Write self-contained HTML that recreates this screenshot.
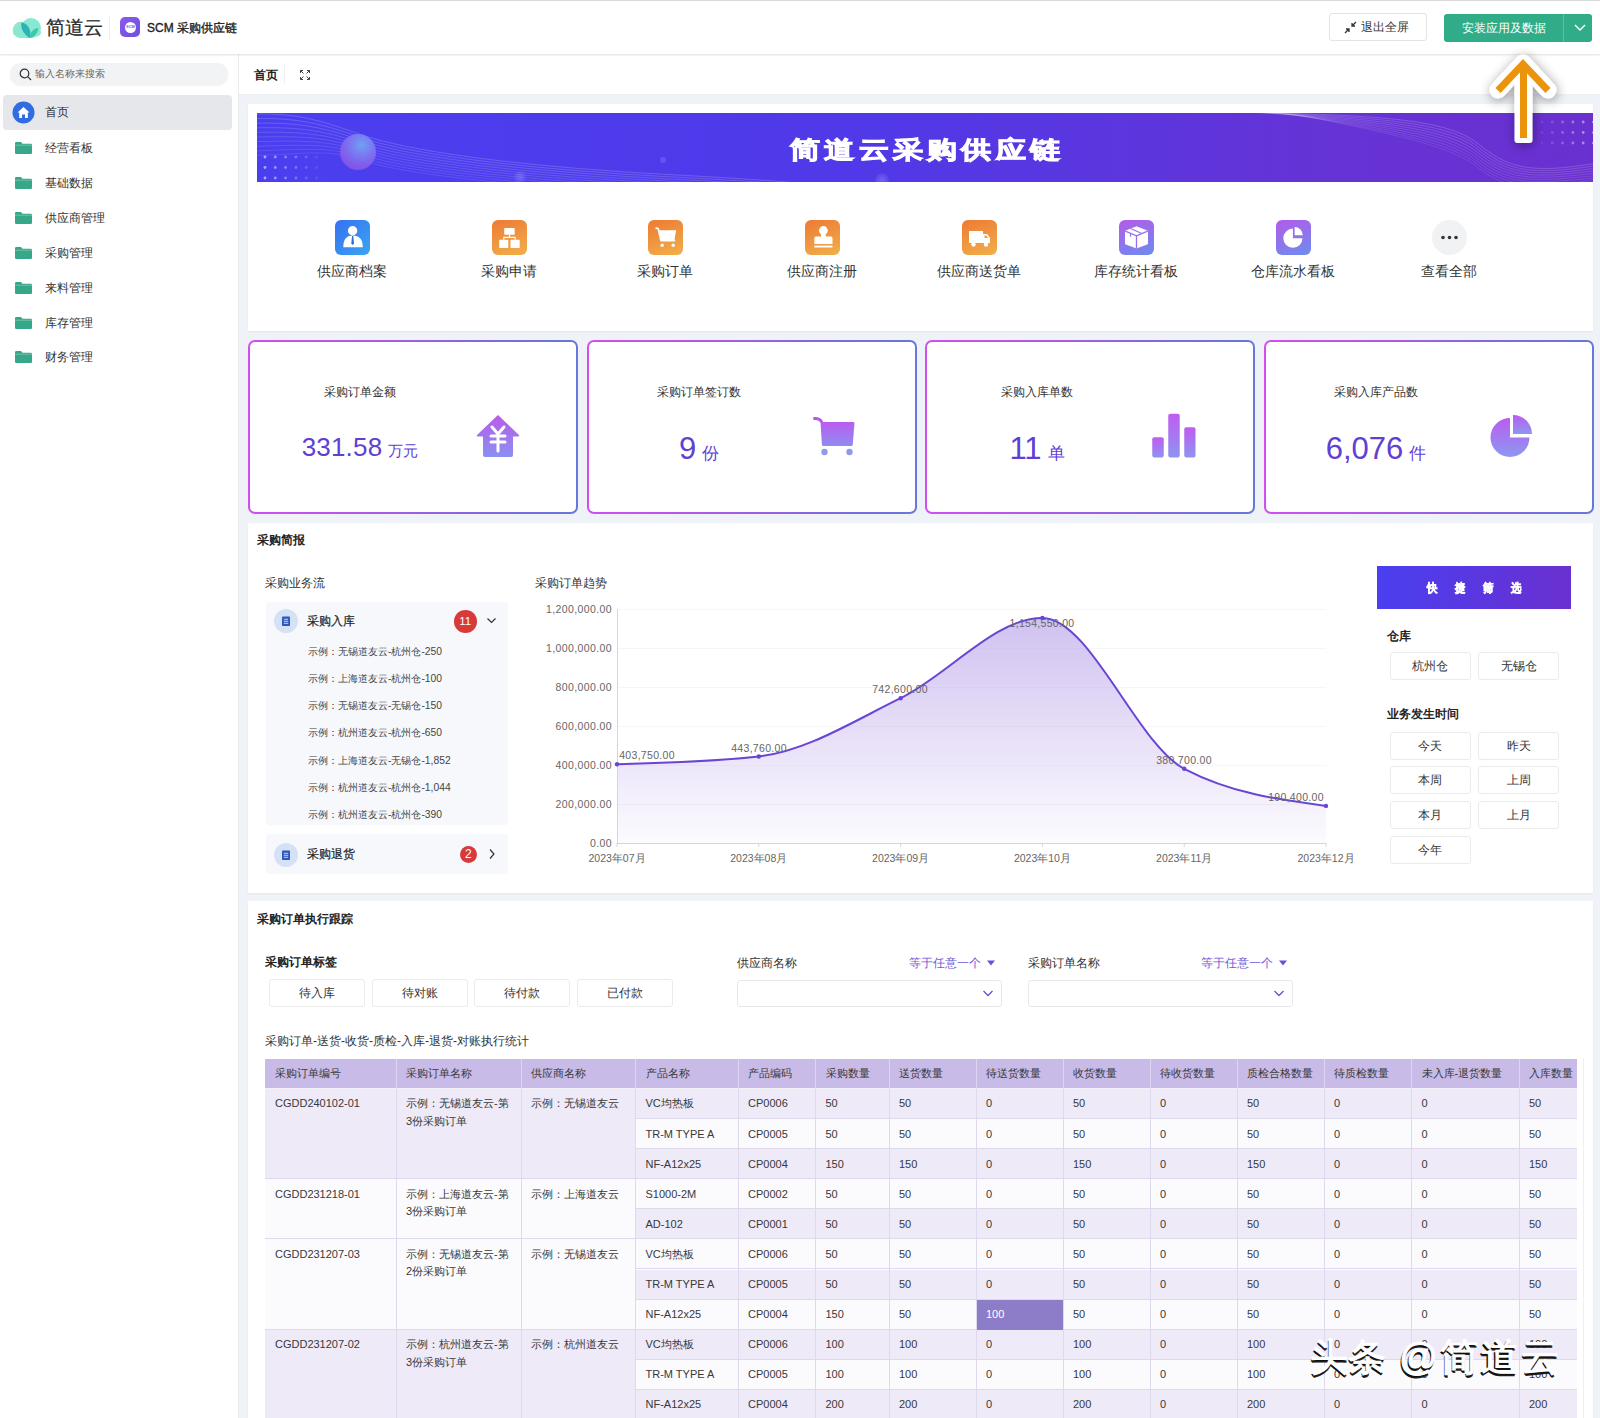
<!DOCTYPE html>
<html><head><meta charset="utf-8">
<style>
*{box-sizing:border-box;margin:0;padding:0}
html,body{width:1600px;height:1418px;overflow:hidden}
body{position:relative;font-family:"Liberation Sans",sans-serif;background:#eff2f6;color:#333;font-size:12px}
.a{position:absolute}
.t{position:absolute;white-space:nowrap;line-height:1}
/* header */
#hdr{left:0;top:0;width:1600px;height:54px;background:#fff;border-top:1px solid #d9d9d9;box-shadow:0 1px 2px rgba(0,0,0,.13);z-index:5}
#side{left:0;top:54px;width:239px;height:1364px;background:#fff;border-right:1px solid #e9eaec}
#tabbar{left:239px;top:54px;width:1361px;height:41px;background:#fff;border-bottom:1px solid #eef0f3}
.card{position:absolute;background:#fff;box-shadow:0 1px 2px rgba(0,0,0,.05)}
.nav{position:absolute;left:0;width:239px;height:35px}
.nav .fold{position:absolute;left:15px;top:12px;width:17px;height:12px}
.nav .lbl{position:absolute;left:45px;top:11px;font-size:12px;line-height:14px;color:#333}
</style></head><body>

<!-- HEADER -->
<div id="hdr" class="a">
  <svg class="a" style="left:0;top:0" width="50" height="45" viewBox="0 0 50 45">
    <circle cx="21" cy="29" r="8.3" fill="#8fe6d1"/>
    <circle cx="31" cy="27" r="10" fill="#86ead3"/>
    <ellipse cx="27" cy="31.5" rx="14" ry="5.8" fill="#8ae8d2"/>
    <path d="M21.5 21.5 C27.5 22, 32 29, 29.8 37 C24.5 34, 20 27.5, 21.5 21.5Z" fill="#2db2b6"/>
    <path d="M29.8 37 C30 31.5, 33 27.5, 38.3 27 C38 32, 34.5 36, 29.8 37Z" fill="#3cc9a9"/>
  </svg>
  <div class="t" style="left:46px;top:17px;font-size:18.8px;line-height:20px;color:#2b2b2b;-webkit-text-stroke:0.25px #2b2b2b">简道云</div>
  <div class="a" style="left:109px;top:15px;width:1px;height:24px;background:#f0f0f0"></div>
  <div class="a" style="left:120px;top:16px;width:20px;height:20px;border-radius:5px;background:linear-gradient(135deg,#8a5af0,#6d4fe0)"></div>
  <div class="a" style="left:124.5px;top:20.5px;width:11px;height:11px;border-radius:50%;background:#fff"></div>
  <div class="t" style="left:126px;top:24px;font-size:4px;color:#7a55e8;font-weight:bold">SCM</div>
  <div class="t" style="left:147px;top:20px;font-size:12px;line-height:14px;color:#222;-webkit-text-stroke:0.35px #222">SCM 采购供应链</div>

  <div class="a" style="left:1329px;top:12px;width:98px;height:28px;border:1px solid #e3e3e3;border-radius:3px;background:#fff"></div>
  <svg class="a" style="left:1344px;top:20px" width="13" height="13" viewBox="0 0 13 13" fill="none" stroke="#333" stroke-width="1.3">
    <path d="M1 12 L5 8 M2 8 H5 V11"/><path d="M12 1 L8 5 M8 2 V5 H11"/>
  </svg>
  <div class="t" style="left:1361px;top:19px;font-size:12px;line-height:14px;color:#333">退出全屏</div>

  <div class="a" style="left:1444px;top:13px;width:148px;height:28px;border-radius:3px;background:#30ad88"></div>
  <div class="a" style="left:1563px;top:13px;width:1px;height:28px;background:#5cc0a2"></div>
  <div class="t" style="left:1462px;top:20px;font-size:12px;line-height:14px;color:#fff">安装应用及数据</div>
  <svg class="a" style="left:1573px;top:22px" width="14" height="10" viewBox="0 0 14 10" fill="none" stroke="#fff" stroke-width="1.5"><path d="M2 2 L7 7 L12 2"/></svg>
</div>


<!-- SIDEBAR -->
<div id="side" class="a">
  <div class="a" style="left:10px;top:9px;width:218px;height:22px;border-radius:11px;background:#f2f3f5;box-shadow:0 1px 2px rgba(0,0,0,.06)"></div>
  <svg class="a" style="left:19px;top:14px" width="13" height="13" viewBox="0 0 13 13" fill="none" stroke="#333" stroke-width="1.2"><circle cx="5.5" cy="5.5" r="4.3"/><path d="M8.7 8.7 L12 12"/></svg>
  <div class="t" style="left:35px;top:14px;font-size:10px;line-height:12px;color:#666">输入名称来搜索</div>
  <div class="a" style="left:3px;top:41px;width:229px;height:35px;border-radius:4px;background:#e5e7eb"></div>
  <svg class="a" style="left:12px;top:47px" width="23" height="23" viewBox="0 0 23 23"><circle cx="11.5" cy="11.5" r="11" fill="#2f6de1"/><path d="M5.5 11.5 L11.5 6 L17.5 11.5 H15.8 V17 H13 V13.5 H10 V17 H7.2 V11.5Z" fill="#fff"/></svg>
  <div class="t" style="left:45px;top:51px;font-size:12px;line-height:14px;color:#333">首页</div>
  <div class="nav" style="top:76.0px"><svg class="fold" viewBox="0 0 17 12"><path d="M0 1.2 Q0 0 1.2 0 H6 L7.5 1.8 H15.8 Q17 1.8 17 3 V10.8 Q17 12 15.8 12 H1.2 Q0 12 0 10.8Z" fill="#37a789"/><path d="M0 3.2 H17" stroke="#7fcab4" stroke-width="0.8"/></svg><div class="lbl">经营看板</div></div>
  <div class="nav" style="top:110.9px"><svg class="fold" viewBox="0 0 17 12"><path d="M0 1.2 Q0 0 1.2 0 H6 L7.5 1.8 H15.8 Q17 1.8 17 3 V10.8 Q17 12 15.8 12 H1.2 Q0 12 0 10.8Z" fill="#37a789"/><path d="M0 3.2 H17" stroke="#7fcab4" stroke-width="0.8"/></svg><div class="lbl">基础数据</div></div>
  <div class="nav" style="top:145.8px"><svg class="fold" viewBox="0 0 17 12"><path d="M0 1.2 Q0 0 1.2 0 H6 L7.5 1.8 H15.8 Q17 1.8 17 3 V10.8 Q17 12 15.8 12 H1.2 Q0 12 0 10.8Z" fill="#37a789"/><path d="M0 3.2 H17" stroke="#7fcab4" stroke-width="0.8"/></svg><div class="lbl">供应商管理</div></div>
  <div class="nav" style="top:180.7px"><svg class="fold" viewBox="0 0 17 12"><path d="M0 1.2 Q0 0 1.2 0 H6 L7.5 1.8 H15.8 Q17 1.8 17 3 V10.8 Q17 12 15.8 12 H1.2 Q0 12 0 10.8Z" fill="#37a789"/><path d="M0 3.2 H17" stroke="#7fcab4" stroke-width="0.8"/></svg><div class="lbl">采购管理</div></div>
  <div class="nav" style="top:215.6px"><svg class="fold" viewBox="0 0 17 12"><path d="M0 1.2 Q0 0 1.2 0 H6 L7.5 1.8 H15.8 Q17 1.8 17 3 V10.8 Q17 12 15.8 12 H1.2 Q0 12 0 10.8Z" fill="#37a789"/><path d="M0 3.2 H17" stroke="#7fcab4" stroke-width="0.8"/></svg><div class="lbl">来料管理</div></div>
  <div class="nav" style="top:250.5px"><svg class="fold" viewBox="0 0 17 12"><path d="M0 1.2 Q0 0 1.2 0 H6 L7.5 1.8 H15.8 Q17 1.8 17 3 V10.8 Q17 12 15.8 12 H1.2 Q0 12 0 10.8Z" fill="#37a789"/><path d="M0 3.2 H17" stroke="#7fcab4" stroke-width="0.8"/></svg><div class="lbl">库存管理</div></div>
  <div class="nav" style="top:285.4px"><svg class="fold" viewBox="0 0 17 12"><path d="M0 1.2 Q0 0 1.2 0 H6 L7.5 1.8 H15.8 Q17 1.8 17 3 V10.8 Q17 12 15.8 12 H1.2 Q0 12 0 10.8Z" fill="#37a789"/><path d="M0 3.2 H17" stroke="#7fcab4" stroke-width="0.8"/></svg><div class="lbl">财务管理</div></div>
</div>


<div id="tabbar" class="a">
  <div class="t" style="left:15px;top:14px;font-size:12px;line-height:14px;color:#222;font-weight:bold">首页</div>
  <div class="a" style="left:45px;top:10px;width:1px;height:20px;background:#f0f0f0"></div>
  <svg class="a" style="left:60px;top:15px" width="12" height="12" viewBox="0 0 12 12" fill="none" stroke="#444" stroke-width="1"><path d="M1.5 4 V1.5 H4 M1.5 1.5 L4.5 4.5"/><path d="M8 1.5 H10.5 V4 M10.5 1.5 L7.5 4.5"/><path d="M1.5 8 V10.5 H4 M1.5 10.5 L4.5 7.5"/><path d="M10.5 8 V10.5 H8 M10.5 10.5 L7.5 7.5"/></svg>
</div>



<!-- CARD1 banner + apps -->
<div class="card" style="left:248px;top:104px;width:1345px;height:227px"></div>
<div class="a" style="left:257px;top:113px;width:1336px;height:69px;overflow:hidden;background:linear-gradient(90deg,#4a3ff0 0%,#5039e8 45%,#6533d6 80%,#6a30d0 100%)">
 <svg class="a" style="left:0;top:0" width="1336" height="69" viewBox="0 0 1336 69">
  <defs><radialGradient id="sph" cx="0.6" cy="0.3" r="0.8"><stop offset="0" stop-color="#6fa6f5" stop-opacity="0.95"/><stop offset="0.6" stop-color="#8a6ef0" stop-opacity="0.8"/><stop offset="1" stop-color="#a050e0" stop-opacity="0.7"/></radialGradient>
  <radialGradient id="sph2" cx="0.5" cy="0.5" r="0.5"><stop offset="0" stop-color="rgba(160,150,255,0.45)"/><stop offset="1" stop-color="rgba(160,150,255,0.1)"/></radialGradient></defs>
  <path d="M0 1.0 C 45 0.0, 70 10.0, 105 22.0 S 230 52.0, 420 62.0 S 600 80.0, 720 84.0" stroke="rgba(255,255,255,0.26)" stroke-width="0.7" fill="none"/><path d="M0 5.6 C 45 4.6, 70 12.8, 105 24.8 S 230 54.2, 420 64.2 S 600 80.5, 720 85.0" stroke="rgba(255,255,255,0.25)" stroke-width="0.7" fill="none"/><path d="M0 10.2 C 45 9.2, 70 15.6, 105 27.6 S 230 56.4, 420 66.4 S 600 81.0, 720 86.0" stroke="rgba(255,255,255,0.24)" stroke-width="0.7" fill="none"/><path d="M0 14.8 C 45 13.8, 70 18.4, 105 30.4 S 230 58.6, 420 68.6 S 600 81.5, 720 87.0" stroke="rgba(255,255,255,0.22)" stroke-width="0.7" fill="none"/><path d="M0 19.4 C 45 18.4, 70 21.2, 105 33.2 S 230 60.8, 420 70.8 S 600 82.0, 720 88.0" stroke="rgba(255,255,255,0.21)" stroke-width="0.7" fill="none"/><path d="M0 24.0 C 45 23.0, 70 24.0, 105 36.0 S 230 63.0, 420 73.0 S 600 82.5, 720 89.0" stroke="rgba(255,255,255,0.20)" stroke-width="0.7" fill="none"/><path d="M0 28.6 C 45 27.6, 70 26.8, 105 38.8 S 230 65.2, 420 75.2 S 600 83.0, 720 90.0" stroke="rgba(255,255,255,0.19)" stroke-width="0.7" fill="none"/><path d="M0 33.2 C 45 32.2, 70 29.6, 105 41.6 S 230 67.4, 420 77.4 S 600 83.5, 720 91.0" stroke="rgba(255,255,255,0.18)" stroke-width="0.7" fill="none"/><path d="M0 37.8 C 45 36.8, 70 32.4, 105 44.4 S 230 69.6, 420 79.6 S 600 84.0, 720 92.0" stroke="rgba(255,255,255,0.16)" stroke-width="0.7" fill="none"/><path d="M0 42.4 C 45 41.4, 70 35.2, 105 47.2 S 230 71.8, 420 81.8 S 600 84.5, 720 93.0" stroke="rgba(255,255,255,0.15)" stroke-width="0.7" fill="none"/>
  <circle cx="101" cy="39" r="18" fill="url(#sph)"/>
  <circle cx="263" cy="64" r="6" fill="url(#sph2)"/>
  <circle cx="625" cy="67" r="7" fill="url(#sph2)"/>
  <circle cx="406" cy="47" r="3" fill="rgba(150,150,255,0.3)"/>
  <circle cx="8.0" cy="44.0" r="1.4" fill="rgba(255,255,255,0.55)"/><circle cx="18.3" cy="44.0" r="1.4" fill="rgba(255,255,255,0.46)"/><circle cx="28.6" cy="44.0" r="1.4" fill="rgba(255,255,255,0.37)"/><circle cx="38.9" cy="44.0" r="1.4" fill="rgba(255,255,255,0.28)"/><circle cx="49.2" cy="44.0" r="1.4" fill="rgba(255,255,255,0.19)"/><circle cx="59.5" cy="44.0" r="1.4" fill="rgba(255,255,255,0.10)"/><circle cx="8.0" cy="54.5" r="1.4" fill="rgba(255,255,255,0.55)"/><circle cx="18.3" cy="54.5" r="1.4" fill="rgba(255,255,255,0.46)"/><circle cx="28.6" cy="54.5" r="1.4" fill="rgba(255,255,255,0.37)"/><circle cx="38.9" cy="54.5" r="1.4" fill="rgba(255,255,255,0.28)"/><circle cx="49.2" cy="54.5" r="1.4" fill="rgba(255,255,255,0.19)"/><circle cx="59.5" cy="54.5" r="1.4" fill="rgba(255,255,255,0.10)"/><circle cx="8.0" cy="65.0" r="1.4" fill="rgba(255,255,255,0.55)"/><circle cx="18.3" cy="65.0" r="1.4" fill="rgba(255,255,255,0.46)"/><circle cx="28.6" cy="65.0" r="1.4" fill="rgba(255,255,255,0.37)"/><circle cx="38.9" cy="65.0" r="1.4" fill="rgba(255,255,255,0.28)"/><circle cx="49.2" cy="65.0" r="1.4" fill="rgba(255,255,255,0.19)"/><circle cx="59.5" cy="65.0" r="1.4" fill="rgba(255,255,255,0.10)"/>
  <path d="M980 -1 C 1120 2, 1190 6, 1220 30 S 1270 62.0, 1340 50.0" stroke="rgba(255,255,255,0.26)" stroke-width="0.7" fill="none"/><path d="M986 -1 C 1120 4, 1190 9, 1220 33 S 1270 63.5, 1340 52.5" stroke="rgba(255,255,255,0.24)" stroke-width="0.7" fill="none"/><path d="M992 -1 C 1120 6, 1190 12, 1220 36 S 1270 65.0, 1340 55.0" stroke="rgba(255,255,255,0.23)" stroke-width="0.7" fill="none"/><path d="M998 -1 C 1120 8, 1190 15, 1220 39 S 1270 66.5, 1340 57.5" stroke="rgba(255,255,255,0.22)" stroke-width="0.7" fill="none"/><path d="M1004 -1 C 1120 10, 1190 18, 1220 42 S 1270 68.0, 1340 60.0" stroke="rgba(255,255,255,0.20)" stroke-width="0.7" fill="none"/><path d="M1010 -1 C 1120 12, 1190 21, 1220 45 S 1270 69.5, 1340 62.5" stroke="rgba(255,255,255,0.18)" stroke-width="0.7" fill="none"/><path d="M1016 -1 C 1120 14, 1190 24, 1220 48 S 1270 71.0, 1340 65.0" stroke="rgba(255,255,255,0.17)" stroke-width="0.7" fill="none"/><path d="M1022 -1 C 1120 16, 1190 27, 1220 51 S 1270 72.5, 1340 67.5" stroke="rgba(255,255,255,0.16)" stroke-width="0.7" fill="none"/><path d="M1028 -1 C 1120 18, 1190 30, 1220 54 S 1270 74.0, 1340 70.0" stroke="rgba(255,255,255,0.14)" stroke-width="0.7" fill="none"/>
  <circle cx="1285.0" cy="9.0" r="1.4" fill="rgba(255,255,255,0.08)"/><circle cx="1295.3" cy="9.0" r="1.4" fill="rgba(255,255,255,0.17)"/><circle cx="1305.6" cy="9.0" r="1.4" fill="rgba(255,255,255,0.26)"/><circle cx="1315.9" cy="9.0" r="1.4" fill="rgba(255,255,255,0.35)"/><circle cx="1326.2" cy="9.0" r="1.4" fill="rgba(255,255,255,0.44)"/><circle cx="1336.5" cy="9.0" r="1.4" fill="rgba(255,255,255,0.53)"/><circle cx="1285.0" cy="19.5" r="1.4" fill="rgba(255,255,255,0.08)"/><circle cx="1295.3" cy="19.5" r="1.4" fill="rgba(255,255,255,0.17)"/><circle cx="1305.6" cy="19.5" r="1.4" fill="rgba(255,255,255,0.26)"/><circle cx="1315.9" cy="19.5" r="1.4" fill="rgba(255,255,255,0.35)"/><circle cx="1326.2" cy="19.5" r="1.4" fill="rgba(255,255,255,0.44)"/><circle cx="1336.5" cy="19.5" r="1.4" fill="rgba(255,255,255,0.53)"/><circle cx="1285.0" cy="30.0" r="1.4" fill="rgba(255,255,255,0.08)"/><circle cx="1295.3" cy="30.0" r="1.4" fill="rgba(255,255,255,0.17)"/><circle cx="1305.6" cy="30.0" r="1.4" fill="rgba(255,255,255,0.26)"/><circle cx="1315.9" cy="30.0" r="1.4" fill="rgba(255,255,255,0.35)"/><circle cx="1326.2" cy="30.0" r="1.4" fill="rgba(255,255,255,0.44)"/><circle cx="1336.5" cy="30.0" r="1.4" fill="rgba(255,255,255,0.53)"/>
 </svg>
 <div class="t" style="left:533px;top:22px;font-size:29.5px;line-height:30px;color:#fff;font-weight:900;letter-spacing:4.3px;-webkit-text-stroke:1.3px #fff;transform:scaleY(0.8);transform-origin:50% 50%">简道云采购供应链</div>
</div>
<div class="a" style="left:334.5px;top:220px;width:35px;height:35px;border-radius:6px;background:linear-gradient(135deg,#3770f0,#3aa6f0)"><svg width="35" height="35" viewBox="0 0 35 35"><circle cx="17.6" cy="10.8" r="4.7" fill="#fff"/><path d="M8.3 27.3 Q8.3 15.6 17.6 15.6 Q27.8 15.6 27.8 27.3Z" fill="#fff"/><path d="M17 16 H18.3 L19 23.5 L17.65 25 L16.3 23.5Z" fill="#2e6fd6"/></svg></div>
<div class="t" style="left:252px;width:200px;text-align:center;top:265px;font-size:13.5px;line-height:14px;color:#333">供应商档案</div>
<div class="a" style="left:491.5px;top:220px;width:35px;height:35px;border-radius:6px;background:linear-gradient(160deg,#ee7a35,#f0b04a)"><svg width="35" height="35" viewBox="0 0 35 35"><rect x="12.2" y="8" width="10.5" height="6.8" rx="0.8" fill="#fff"/><rect x="7.2" y="19.8" width="9.1" height="8.2" rx="0.8" fill="#fff"/><rect x="18.5" y="19.8" width="9.2" height="8.2" rx="0.8" fill="#fff"/><path d="M17.5 14.8 V17.4 H11.8 V19.8 M17.5 17.4 H23.1 V19.8" stroke="#fff" stroke-width="1.2" fill="none"/></svg></div>
<div class="t" style="left:409px;width:200px;text-align:center;top:265px;font-size:13.5px;line-height:14px;color:#333">采购申请</div>
<div class="a" style="left:647.5px;top:220px;width:35px;height:35px;border-radius:6px;background:linear-gradient(160deg,#ee7a35,#f0b04a)"><svg width="35" height="35" viewBox="0 0 35 35"><path d="M8.2 8.2 L10.2 8.6 L13 20.5 H26.5" stroke="#fff" stroke-width="1.8" fill="none" stroke-linecap="round" stroke-linejoin="round"/><path d="M10.8 10.3 H28.2 L26.2 20.5 H13Z" fill="#fff"/><circle cx="14.2" cy="25.2" r="1.7" fill="#fff"/><circle cx="25.2" cy="25.2" r="1.7" fill="#fff"/></svg></div>
<div class="t" style="left:565px;width:200px;text-align:center;top:265px;font-size:13.5px;line-height:14px;color:#333">采购订单</div>
<div class="a" style="left:804.5px;top:220px;width:35px;height:35px;border-radius:6px;background:linear-gradient(160deg,#ee7a35,#f0b04a)"><svg width="35" height="35" viewBox="0 0 35 35"><circle cx="18.4" cy="10.5" r="4.4" fill="#fff"/><path d="M16 14 H20.8 V16.5 H25.8 Q27.5 16.5 27.5 18.2 V24 H9.3 V18.2 Q9.3 16.5 11 16.5 H16Z" fill="#fff"/><rect x="9.3" y="25.6" width="18.2" height="1.9" fill="#fff"/></svg></div>
<div class="t" style="left:722px;width:200px;text-align:center;top:265px;font-size:13.5px;line-height:14px;color:#333">供应商注册</div>
<div class="a" style="left:961.5px;top:220px;width:35px;height:35px;border-radius:6px;background:linear-gradient(160deg,#ee7a35,#f0b04a)"><svg width="35" height="35" viewBox="0 0 35 35"><path d="M7 11 H21 V23 H7Z" fill="#fff"/><path d="M21 14 H25 L28 18 V23 H21Z" fill="#fff"/><circle cx="11.5" cy="24.5" r="2.2" fill="#fff"/><circle cx="24" cy="24.5" r="2.2" fill="#fff"/><path d="M22.5 15.5 H24.5 L26 18 H22.5Z" fill="#f0a048"/></svg></div>
<div class="t" style="left:879px;width:200px;text-align:center;top:265px;font-size:13.5px;line-height:14px;color:#333">供应商送货单</div>
<div class="a" style="left:1118.5px;top:220px;width:35px;height:35px;border-radius:6px;background:linear-gradient(160deg,#b35be8,#6d8cf0)"><svg width="35" height="35" viewBox="0 0 35 35"><path d="M17.5 6.2 L28.2 10.6 Q29 11 29 11.8 V23.2 Q29 24 28.2 24.4 L17.5 28.6 L6.8 24.4 Q6 24 6 23.2 V11.8 Q6 11 6.8 10.6Z" fill="#fff"/><path d="M6.3 11.2 L17.5 15.8 L28.7 11.2 M17.5 15.8 V28.6" stroke="#9470ea" stroke-width="1.3" fill="none"/><path d="M11.5 8.4 L22.8 13.4 M11.5 13.3 V16.8" stroke="#9470ea" stroke-width="1.1" fill="none"/></svg></div>
<div class="t" style="left:1036px;width:200px;text-align:center;top:265px;font-size:13.5px;line-height:14px;color:#333">库存统计看板</div>
<div class="a" style="left:1275.5px;top:220px;width:35px;height:35px;border-radius:6px;background:linear-gradient(160deg,#b35be8,#6d8cf0)"><svg width="35" height="35" viewBox="0 0 35 35"><path d="M16.9 8.6 A9.6 9.6 0 1 0 26.5 18.2 H16.9Z" fill="#fff"/><path d="M18.6 7 A8.2 8.2 0 0 1 26.8 15.2 H18.6Z" fill="#fff"/></svg></div>
<div class="t" style="left:1193px;width:200px;text-align:center;top:265px;font-size:13.5px;line-height:14px;color:#333">仓库流水看板</div>
<div class="a" style="left:1431.5px;top:220px;width:35px;height:35px;border-radius:50%;background:#f1f2f4"><svg width="35" height="35" viewBox="0 0 35 35"><circle cx="11" cy="17.5" r="1.8" fill="#333"/><circle cx="17.5" cy="17.5" r="1.8" fill="#333"/><circle cx="24" cy="17.5" r="1.8" fill="#333"/></svg></div>
<div class="t" style="left:1349px;width:200px;text-align:center;top:265px;font-size:13.5px;line-height:14px;color:#333">查看全部</div>

<!-- KPI -->
<div class="a" style="left:248px;top:340px;width:330px;height:174px;border:2px solid transparent;border-radius:7px;background:linear-gradient(#fff,#fff) padding-box,linear-gradient(90deg,#d24ef2 0%,#a95ae6 40%,#7d6ade 75%,#6878da 100%) border-box"></div>
<div class="t" style="left:260px;width:200px;text-align:center;top:385px;font-size:12px;line-height:14px;color:#333">采购订单金额</div>
<div class="t" style="left:260px;width:200px;text-align:center;top:432px;line-height:30px;color:#5f40d4"><span style="font-size:26px;letter-spacing:0.2px">331.58</span><span style="font-size:14.5px;margin-left:6px">万元</span></div>
<div class="a" style="left:475px;top:413px;width:46px;height:46px"><svg width="46" height="46" viewBox="0 0 46 46"><defs><linearGradient id="kg1" x1="0" y1="0" x2="0" y2="1"><stop offset="0" stop-color="#b95be8"/><stop offset="1" stop-color="#8a90f2"/></linearGradient></defs><path d="M23 2 L44 22 Q45 23.5 43 23.5 H38 V42 Q38 44 36 44 H10 Q8 44 8 42 V23.5 H3 Q1 23.5 2 22Z" fill="url(#kg1)"/><path d="M17 14 L23 21 L29 14 M16 23 H30 M16 29 H30 M23 21 V38" stroke="#fff" stroke-width="3" fill="none" stroke-linecap="round"/></svg></div>
<div class="a" style="left:587px;top:340px;width:330px;height:174px;border:2px solid transparent;border-radius:7px;background:linear-gradient(#fff,#fff) padding-box,linear-gradient(90deg,#d24ef2 0%,#a95ae6 40%,#7d6ade 75%,#6878da 100%) border-box"></div>
<div class="t" style="left:599px;width:200px;text-align:center;top:385px;font-size:12px;line-height:14px;color:#333">采购订单签订数</div>
<div class="t" style="left:599px;width:200px;text-align:center;top:433.5px;line-height:30px;color:#5f40d4"><span style="font-size:31px;letter-spacing:0px">9</span><span style="font-size:17px;margin-left:6px">份</span></div>
<div class="a" style="left:811px;top:411px;width:46px;height:46px"><svg width="46" height="46" viewBox="0 0 46 46"><defs><linearGradient id="kg2" x1="0" y1="0" x2="0" y2="1"><stop offset="0" stop-color="#bb5cf0"/><stop offset="1" stop-color="#8f8cf0"/></linearGradient></defs><path d="M3.5 7.5 Q8 7 10.5 10.5" stroke="#b45ae8" stroke-width="3" fill="none" stroke-linecap="round"/><path d="M9.5 11 H42.5 Q43.5 11 43.4 12.5 L41.8 33.5 Q41.6 35 40 35 H12.5 Q11 35 10.9 33.5Z" fill="url(#kg2)"/><circle cx="13.5" cy="41" r="3.2" fill="#8e9af0"/><circle cx="38.5" cy="41" r="3.2" fill="#8e9af0"/></svg></div>
<div class="a" style="left:925px;top:340px;width:330px;height:174px;border:2px solid transparent;border-radius:7px;background:linear-gradient(#fff,#fff) padding-box,linear-gradient(90deg,#d24ef2 0%,#a95ae6 40%,#7d6ade 75%,#6878da 100%) border-box"></div>
<div class="t" style="left:937px;width:200px;text-align:center;top:385px;font-size:12px;line-height:14px;color:#333">采购入库单数</div>
<div class="t" style="left:937px;width:200px;text-align:center;top:433.5px;line-height:30px;color:#5f40d4"><span style="font-size:31px;letter-spacing:0px">11</span><span style="font-size:17px;margin-left:6px">单</span></div>
<div class="a" style="left:1151px;top:413px;width:46px;height:46px"><svg width="46" height="46" viewBox="0 0 46 46"><defs><linearGradient id="kg3" x1="0" y1="0" x2="0" y2="1"><stop offset="0" stop-color="#c05cf0"/><stop offset="1" stop-color="#8e94f0"/></linearGradient></defs><rect x="1.25" y="24.25" width="11.5" height="20.25" rx="2" fill="url(#kg3)"/><rect x="17.25" y="0.75" width="11.5" height="43.75" rx="2" fill="url(#kg3)"/><rect x="33.25" y="14.25" width="11.25" height="30.25" rx="2" fill="url(#kg3)"/></svg></div>
<div class="a" style="left:1264px;top:340px;width:330px;height:174px;border:2px solid transparent;border-radius:7px;background:linear-gradient(#fff,#fff) padding-box,linear-gradient(90deg,#d24ef2 0%,#a95ae6 40%,#7d6ade 75%,#6878da 100%) border-box"></div>
<div class="t" style="left:1276px;width:200px;text-align:center;top:385px;font-size:12px;line-height:14px;color:#333">采购入库产品数</div>
<div class="t" style="left:1276px;width:200px;text-align:center;top:433.5px;line-height:30px;color:#5f40d4"><span style="font-size:31px;letter-spacing:0px">6,076</span><span style="font-size:17px;margin-left:6px">件</span></div>
<div class="a" style="left:1489px;top:414px;width:46px;height:46px"><svg width="46" height="46" viewBox="0 0 46 46"><defs><linearGradient id="kg4" x1="0" y1="0" x2="0" y2="1"><stop offset="0" stop-color="#bb5cf0"/><stop offset="1" stop-color="#8b98f0"/></linearGradient></defs><path d="M21 4 A19.5 19.5 0 1 0 40.5 23.5 H21Z" fill="url(#kg4)"/><path d="M24 1 A19 19 0 0 1 43 20 H24Z" fill="url(#kg4)"/></svg></div>

<!-- BRIEF CARD -->
<div class="card" style="left:248px;top:523px;width:1345px;height:370px"></div>
<div class="t" style="left:257px;top:533px;font-size:12px;line-height:14px;color:#222;font-weight:bold">采购简报</div>
<div class="t" style="left:265px;top:576px;font-size:12px;line-height:14px;color:#333">采购业务流</div>
<div class="t" style="left:535px;top:576px;font-size:12px;line-height:14px;color:#333">采购订单趋势</div>
<div class="a" style="left:266px;top:602px;width:242px;height:223px;background:#f7f8fc;border-radius:3px"></div>
<div class="a" style="left:274px;top:609px;width:24px;height:24px"><svg width="24" height="24" viewBox="0 0 24 24"><circle cx="12" cy="12" r="12" fill="#d5e1f6"/><rect x="8" y="7.5" width="8" height="9.5" rx="0.8" fill="#2d58b9"/><path d="M9.8 10.3 H14.2 M9.8 12.3 H14.2 M9.8 14.3 H14.2" stroke="#d5e1f6" stroke-width="0.9"/></svg></div>
<div class="t" style="left:307px;top:614px;font-size:12px;line-height:14px;color:#222;-webkit-text-stroke:0.2px #222">采购入库</div>
<div class="a" style="left:453.5px;top:609.5px;width:23.5px;height:23px;border-radius:50%;background:#d8393a;color:#fff;font-size:11.5px;line-height:23px;text-align:center">11</div>
<svg class="a" style="left:486px;top:617px" width="11" height="8" viewBox="0 0 11 8" fill="none" stroke="#333" stroke-width="1.2"><path d="M1.5 1.5 L5.5 5.5 L9.5 1.5"/></svg>
<div class="t" style="left:308px;top:645.5px;font-size:10.3px;line-height:12px;color:#444">示例：无锡道友云-杭州仓-250</div>
<div class="t" style="left:308px;top:672.8px;font-size:10.3px;line-height:12px;color:#444">示例：上海道友云-杭州仓-100</div>
<div class="t" style="left:308px;top:700.1px;font-size:10.3px;line-height:12px;color:#444">示例：无锡道友云-无锡仓-150</div>
<div class="t" style="left:308px;top:727.4px;font-size:10.3px;line-height:12px;color:#444">示例：杭州道友云-杭州仓-650</div>
<div class="t" style="left:308px;top:754.7px;font-size:10.3px;line-height:12px;color:#444">示例：上海道友云-无锡仓-1,852</div>
<div class="t" style="left:308px;top:782.0px;font-size:10.3px;line-height:12px;color:#444">示例：杭州道友云-杭州仓-1,044</div>
<div class="t" style="left:308px;top:809.3px;font-size:10.3px;line-height:12px;color:#444">示例：杭州道友云-杭州仓-390</div>
<div class="a" style="left:266px;top:834px;width:242px;height:40px;background:#f7f8fc;border-radius:3px"></div>
<div class="a" style="left:274px;top:842.5px;width:24px;height:24px"><svg width="24" height="24" viewBox="0 0 24 24"><circle cx="12" cy="12" r="12" fill="#d5e1f6"/><rect x="8" y="7.5" width="8" height="9.5" rx="0.8" fill="#2d58b9"/><path d="M9.8 10.3 H14.2 M9.8 12.3 H14.2 M9.8 14.3 H14.2" stroke="#d5e1f6" stroke-width="0.9"/></svg></div>
<div class="t" style="left:307px;top:847px;font-size:12px;line-height:14px;color:#222;-webkit-text-stroke:0.2px #222">采购退货</div>
<div class="a" style="left:459.5px;top:845.5px;width:17.5px;height:17.5px;border-radius:50%;background:#d8393a;color:#fff;font-size:12px;line-height:17.5px;text-align:center">2</div>
<svg class="a" style="left:488px;top:848px" width="8" height="12" viewBox="0 0 8 12" fill="none" stroke="#333" stroke-width="1.2"><path d="M2 1.5 L6 6 L2 10.5"/></svg>
<svg class="a" style="left:0;top:0" width="1600" height="1418" viewBox="0 0 1600 1418"><defs><linearGradient id="ag" x1="0" y1="618" x2="0" y2="843" gradientUnits="userSpaceOnUse"><stop offset="0" stop-color="#b49ce8" stop-opacity="0.62"/><stop offset="1" stop-color="#b49ce8" stop-opacity="0.04"/></linearGradient></defs><path d="M617 609.5 H1326" stroke="#f6f6f7" stroke-width="1"/><path d="M617 648.5 H1326" stroke="#f6f6f7" stroke-width="1"/><path d="M617 687.5 H1326" stroke="#f6f6f7" stroke-width="1"/><path d="M617 726.5 H1326" stroke="#f6f6f7" stroke-width="1"/><path d="M617 765.5 H1326" stroke="#f6f6f7" stroke-width="1"/><path d="M617 804.5 H1326" stroke="#f6f6f7" stroke-width="1"/><path d="M617.0 764.3 C664.3 763.0 711.5 761.7 758.8 756.5 C806.1 751.3 853.3 721.3 900.6 698.2 C947.9 675.1 995.1 617.9 1042.4 617.9 C1089.7 617.9 1136.9 744.0 1184.2 768.8 C1231.5 793.5 1278.7 799.7 1326.0 805.9 L1326 843 L617 843Z" fill="url(#ag)"/><path d="M617.5 609 V843" stroke="#d6d6d6" stroke-width="1"/><path d="M617 843.5 H1326" stroke="#d6d6d6" stroke-width="1"/><path d="M617.0 843 V847" stroke="#d6d6d6" stroke-width="1"/><path d="M758.8 843 V847" stroke="#d6d6d6" stroke-width="1"/><path d="M900.6 843 V847" stroke="#d6d6d6" stroke-width="1"/><path d="M1042.4 843 V847" stroke="#d6d6d6" stroke-width="1"/><path d="M1184.2 843 V847" stroke="#d6d6d6" stroke-width="1"/><path d="M1326.0 843 V847" stroke="#d6d6d6" stroke-width="1"/><path d="M617.0 764.3 C664.3 763.0 711.5 761.7 758.8 756.5 C806.1 751.3 853.3 721.3 900.6 698.2 C947.9 675.1 995.1 617.9 1042.4 617.9 C1089.7 617.9 1136.9 744.0 1184.2 768.8 C1231.5 793.5 1278.7 799.7 1326.0 805.9" stroke="#6a45d4" stroke-width="2" fill="none"/><circle cx="617.0" cy="764.3" r="2.2" fill="#6a45d4"/><circle cx="758.8" cy="756.5" r="2.2" fill="#6a45d4"/><circle cx="900.6" cy="698.2" r="2.2" fill="#6a45d4"/><circle cx="1042.4" cy="617.9" r="2.2" fill="#6a45d4"/><circle cx="1184.2" cy="768.8" r="2.2" fill="#6a45d4"/><circle cx="1326.0" cy="805.9" r="2.2" fill="#6a45d4"/><text x="612" y="612.8" text-anchor="end" font-size="10.5" letter-spacing="0.4" fill="#666" font-family="Liberation Sans">1,200,000.00</text><text x="612" y="651.8" text-anchor="end" font-size="10.5" letter-spacing="0.4" fill="#666" font-family="Liberation Sans">1,000,000.00</text><text x="612" y="690.8" text-anchor="end" font-size="10.5" letter-spacing="0.4" fill="#666" font-family="Liberation Sans">800,000.00</text><text x="612" y="729.8" text-anchor="end" font-size="10.5" letter-spacing="0.4" fill="#666" font-family="Liberation Sans">600,000.00</text><text x="612" y="768.8" text-anchor="end" font-size="10.5" letter-spacing="0.4" fill="#666" font-family="Liberation Sans">400,000.00</text><text x="612" y="807.8" text-anchor="end" font-size="10.5" letter-spacing="0.4" fill="#666" font-family="Liberation Sans">200,000.00</text><text x="612" y="846.8" text-anchor="end" font-size="10.5" letter-spacing="0.4" fill="#666" font-family="Liberation Sans">0.00</text><text x="617.0" y="862" text-anchor="middle" font-size="10.5" fill="#666" font-family="Liberation Sans">2023年07月</text><text x="758.8" y="862" text-anchor="middle" font-size="10.5" fill="#666" font-family="Liberation Sans">2023年08月</text><text x="900.6" y="862" text-anchor="middle" font-size="10.5" fill="#666" font-family="Liberation Sans">2023年09月</text><text x="1042.4" y="862" text-anchor="middle" font-size="10.5" fill="#666" font-family="Liberation Sans">2023年10月</text><text x="1184.2" y="862" text-anchor="middle" font-size="10.5" fill="#666" font-family="Liberation Sans">2023年11月</text><text x="1326.0" y="862" text-anchor="middle" font-size="10.5" fill="#666" font-family="Liberation Sans">2023年12月</text><text x="647" y="759" text-anchor="middle" font-size="10.5" letter-spacing="0.3" fill="#666" font-family="Liberation Sans">403,750.00</text><text x="759" y="752" text-anchor="middle" font-size="10.5" letter-spacing="0.3" fill="#666" font-family="Liberation Sans">443,760.00</text><text x="900" y="693" text-anchor="middle" font-size="10.5" letter-spacing="0.3" fill="#666" font-family="Liberation Sans">742,600.00</text><text x="1042" y="627" text-anchor="middle" font-size="10.5" letter-spacing="0.3" fill="#666" font-family="Liberation Sans">1,154,550.00</text><text x="1184" y="764" text-anchor="middle" font-size="10.5" letter-spacing="0.3" fill="#666" font-family="Liberation Sans">380,700.00</text><text x="1296" y="801" text-anchor="middle" font-size="10.5" letter-spacing="0.3" fill="#666" font-family="Liberation Sans">190,400.00</text></svg>
<div class="a" style="left:1377px;top:566px;width:194px;height:43px;background:linear-gradient(90deg,#4a3ff0,#6a30d0)"></div>
<div class="t" style="left:1377px;width:194px;text-align:center;top:580px;font-size:13px;line-height:16px;color:#fff;font-weight:900;letter-spacing:21.8px;text-indent:21.8px;-webkit-text-stroke:0.6px #fff;transform:scale(0.8,0.92);transform-origin:50% 50%">快捷筛选</div>
<div class="t" style="left:1387px;top:629px;font-size:11.5px;line-height:14px;color:#222;font-weight:bold">仓库</div>
<div class="t" style="left:1387px;top:707px;font-size:11.5px;line-height:14px;color:#222;font-weight:bold">业务发生时间</div>
<div class="a" style="left:1389.5px;top:652px;width:81px;height:28px;border:1px solid #ebebeb;border-radius:3px;background:#fff;font-size:12px;line-height:26px;text-align:center;color:#333">杭州仓</div>
<div class="a" style="left:1478px;top:652px;width:81px;height:28px;border:1px solid #ebebeb;border-radius:3px;background:#fff;font-size:12px;line-height:26px;text-align:center;color:#333">无锡仓</div>
<div class="a" style="left:1389.5px;top:731.5px;width:81px;height:28px;border:1px solid #ebebeb;border-radius:3px;background:#fff;font-size:12px;line-height:26px;text-align:center;color:#333">今天</div>
<div class="a" style="left:1478px;top:731.5px;width:81px;height:28px;border:1px solid #ebebeb;border-radius:3px;background:#fff;font-size:12px;line-height:26px;text-align:center;color:#333">昨天</div>
<div class="a" style="left:1389.5px;top:766px;width:81px;height:28px;border:1px solid #ebebeb;border-radius:3px;background:#fff;font-size:12px;line-height:26px;text-align:center;color:#333">本周</div>
<div class="a" style="left:1478px;top:766px;width:81px;height:28px;border:1px solid #ebebeb;border-radius:3px;background:#fff;font-size:12px;line-height:26px;text-align:center;color:#333">上周</div>
<div class="a" style="left:1389.5px;top:801px;width:81px;height:28px;border:1px solid #ebebeb;border-radius:3px;background:#fff;font-size:12px;line-height:26px;text-align:center;color:#333">本月</div>
<div class="a" style="left:1478px;top:801px;width:81px;height:28px;border:1px solid #ebebeb;border-radius:3px;background:#fff;font-size:12px;line-height:26px;text-align:center;color:#333">上月</div>
<div class="a" style="left:1389.5px;top:836px;width:81px;height:28px;border:1px solid #ebebeb;border-radius:3px;background:#fff;font-size:12px;line-height:26px;text-align:center;color:#333">今年</div>

<!-- TRACK CARD -->
<div class="card" style="left:248px;top:901px;width:1345px;height:517px"></div>
<div class="t" style="left:257px;top:912px;font-size:12px;line-height:14px;color:#222;font-weight:bold">采购订单执行跟踪</div>
<div class="t" style="left:265px;top:955px;font-size:12px;line-height:14px;color:#222;font-weight:bold">采购订单标签</div>
<div class="a" style="left:269.0px;top:979px;width:96px;height:28px;border:1px solid #ebebeb;border-radius:3px;background:#fff;font-size:12px;line-height:26px;text-align:center;color:#333">待入库</div>
<div class="a" style="left:371.6px;top:979px;width:96px;height:28px;border:1px solid #ebebeb;border-radius:3px;background:#fff;font-size:12px;line-height:26px;text-align:center;color:#333">待对账</div>
<div class="a" style="left:474.2px;top:979px;width:96px;height:28px;border:1px solid #ebebeb;border-radius:3px;background:#fff;font-size:12px;line-height:26px;text-align:center;color:#333">待付款</div>
<div class="a" style="left:576.8px;top:979px;width:96px;height:28px;border:1px solid #ebebeb;border-radius:3px;background:#fff;font-size:12px;line-height:26px;text-align:center;color:#333">已付款</div>
<div class="t" style="left:737px;top:956px;font-size:12px;line-height:14px;color:#333">供应商名称</div>
<div class="t" style="left:909px;top:956px;font-size:12px;line-height:14px;color:#7457dc">等于任意一个</div>
<svg class="a" style="left:986px;top:959px" width="10" height="8" viewBox="0 0 10 8"><path d="M1 1.5 H9 L5 6.5Z" fill="#6a4fd8"/></svg>
<div class="a" style="left:737px;top:980px;width:265px;height:27px;border:1px solid #e8e8e8;border-radius:3px;background:#fff"></div>
<svg class="a" style="left:982px;top:989px" width="12" height="9" viewBox="0 0 12 9" fill="none" stroke="#6a4fd8" stroke-width="1.3"><path d="M1.5 2 L6 6.5 L10.5 2"/></svg>
<div class="t" style="left:1027.5px;top:956px;font-size:12px;line-height:14px;color:#333">采购订单名称</div>
<div class="t" style="left:1200.5px;top:956px;font-size:12px;line-height:14px;color:#7457dc">等于任意一个</div>
<svg class="a" style="left:1277.5px;top:959px" width="10" height="8" viewBox="0 0 10 8"><path d="M1 1.5 H9 L5 6.5Z" fill="#6a4fd8"/></svg>
<div class="a" style="left:1027.5px;top:980px;width:265px;height:27px;border:1px solid #e8e8e8;border-radius:3px;background:#fff"></div>
<svg class="a" style="left:1272.5px;top:989px" width="12" height="9" viewBox="0 0 12 9" fill="none" stroke="#6a4fd8" stroke-width="1.3"><path d="M1.5 2 L6 6.5 L10.5 2"/></svg>
<div class="t" style="left:265px;top:1034px;font-size:12px;line-height:14px;color:#333">采购订单-送货-收货-质检-入库-退货-对账执行统计</div>
<div class="a" style="left:0;top:0;width:1600px;height:1418px;overflow:hidden">
<div class="a" style="left:265px;top:1059px;width:1312px;height:29px;background:#c8bbe7"></div>
<div class="a" style="left:265px;top:1088px;width:1312px;height:1px;background:#f3f0fa"></div>
<div class="t" style="left:275px;top:1067px;font-size:11px;line-height:13px;color:#383838">采购订单编号</div>
<div class="t" style="left:406px;top:1067px;font-size:11px;line-height:13px;color:#383838">采购订单名称</div>
<div class="a" style="left:395.5px;top:1059px;width:1px;height:29px;background:#dcd4f0"></div>
<div class="t" style="left:531px;top:1067px;font-size:11px;line-height:13px;color:#383838">供应商名称</div>
<div class="a" style="left:520.5px;top:1059px;width:1px;height:29px;background:#dcd4f0"></div>
<div class="t" style="left:645.5px;top:1067px;font-size:11px;line-height:13px;color:#383838">产品名称</div>
<div class="a" style="left:635.0px;top:1059px;width:1px;height:29px;background:#dcd4f0"></div>
<div class="t" style="left:748px;top:1067px;font-size:11px;line-height:13px;color:#383838">产品编码</div>
<div class="a" style="left:737.5px;top:1059px;width:1px;height:29px;background:#dcd4f0"></div>
<div class="t" style="left:825.5px;top:1067px;font-size:11px;line-height:13px;color:#383838">采购数量</div>
<div class="a" style="left:815.0px;top:1059px;width:1px;height:29px;background:#dcd4f0"></div>
<div class="t" style="left:899px;top:1067px;font-size:11px;line-height:13px;color:#383838">送货数量</div>
<div class="a" style="left:888.5px;top:1059px;width:1px;height:29px;background:#dcd4f0"></div>
<div class="t" style="left:986px;top:1067px;font-size:11px;line-height:13px;color:#383838">待送货数量</div>
<div class="a" style="left:975.5px;top:1059px;width:1px;height:29px;background:#dcd4f0"></div>
<div class="t" style="left:1073px;top:1067px;font-size:11px;line-height:13px;color:#383838">收货数量</div>
<div class="a" style="left:1062.5px;top:1059px;width:1px;height:29px;background:#dcd4f0"></div>
<div class="t" style="left:1160px;top:1067px;font-size:11px;line-height:13px;color:#383838">待收货数量</div>
<div class="a" style="left:1149.5px;top:1059px;width:1px;height:29px;background:#dcd4f0"></div>
<div class="t" style="left:1247px;top:1067px;font-size:11px;line-height:13px;color:#383838">质检合格数量</div>
<div class="a" style="left:1236.5px;top:1059px;width:1px;height:29px;background:#dcd4f0"></div>
<div class="t" style="left:1334px;top:1067px;font-size:11px;line-height:13px;color:#383838">待质检数量</div>
<div class="a" style="left:1323.5px;top:1059px;width:1px;height:29px;background:#dcd4f0"></div>
<div class="t" style="left:1421.5px;top:1067px;font-size:11px;line-height:13px;color:#383838">未入库-退货数量</div>
<div class="a" style="left:1411.0px;top:1059px;width:1px;height:29px;background:#dcd4f0"></div>
<div class="t" style="left:1529px;top:1067px;font-size:11px;line-height:13px;color:#383838">入库数量</div>
<div class="a" style="left:1518.5px;top:1059px;width:1px;height:29px;background:#dcd4f0"></div>
<div class="a" style="left:635.5px;top:1088.9px;width:941.5px;height:30.1px;background:#eeeaf8;border-bottom:1px solid #dfd9ee"></div>
<div class="t" style="left:645.5px;top:1097.4px;font-size:11px;line-height:13px;color:#383838">VC均热板</div>
<div class="t" style="left:748px;top:1097.4px;font-size:11px;line-height:13px;color:#383838">CP0006</div>
<div class="t" style="left:825.5px;top:1097.4px;font-size:11px;line-height:13px;color:#383838">50</div>
<div class="t" style="left:899px;top:1097.4px;font-size:11px;line-height:13px;color:#383838">50</div>
<div class="t" style="left:986px;top:1097.4px;font-size:11px;line-height:13px;color:#383838">0</div>
<div class="t" style="left:1073px;top:1097.4px;font-size:11px;line-height:13px;color:#383838">50</div>
<div class="t" style="left:1160px;top:1097.4px;font-size:11px;line-height:13px;color:#383838">0</div>
<div class="t" style="left:1247px;top:1097.4px;font-size:11px;line-height:13px;color:#383838">50</div>
<div class="t" style="left:1334px;top:1097.4px;font-size:11px;line-height:13px;color:#383838">0</div>
<div class="t" style="left:1421.5px;top:1097.4px;font-size:11px;line-height:13px;color:#383838">0</div>
<div class="t" style="left:1529px;top:1097.4px;font-size:11px;line-height:13px;color:#383838">50</div>
<div class="a" style="left:635.5px;top:1119.0px;width:941.5px;height:30.1px;background:#fbfbfe;border-bottom:1px solid #dfd9ee"></div>
<div class="t" style="left:645.5px;top:1127.5px;font-size:11px;line-height:13px;color:#383838">TR-M TYPE A</div>
<div class="t" style="left:748px;top:1127.5px;font-size:11px;line-height:13px;color:#383838">CP0005</div>
<div class="t" style="left:825.5px;top:1127.5px;font-size:11px;line-height:13px;color:#383838">50</div>
<div class="t" style="left:899px;top:1127.5px;font-size:11px;line-height:13px;color:#383838">50</div>
<div class="t" style="left:986px;top:1127.5px;font-size:11px;line-height:13px;color:#383838">0</div>
<div class="t" style="left:1073px;top:1127.5px;font-size:11px;line-height:13px;color:#383838">50</div>
<div class="t" style="left:1160px;top:1127.5px;font-size:11px;line-height:13px;color:#383838">0</div>
<div class="t" style="left:1247px;top:1127.5px;font-size:11px;line-height:13px;color:#383838">50</div>
<div class="t" style="left:1334px;top:1127.5px;font-size:11px;line-height:13px;color:#383838">0</div>
<div class="t" style="left:1421.5px;top:1127.5px;font-size:11px;line-height:13px;color:#383838">0</div>
<div class="t" style="left:1529px;top:1127.5px;font-size:11px;line-height:13px;color:#383838">50</div>
<div class="a" style="left:635.5px;top:1149.1px;width:941.5px;height:30.1px;background:#eeeaf8;border-bottom:1px solid #dfd9ee"></div>
<div class="t" style="left:645.5px;top:1157.6px;font-size:11px;line-height:13px;color:#383838">NF-A12x25</div>
<div class="t" style="left:748px;top:1157.6px;font-size:11px;line-height:13px;color:#383838">CP0004</div>
<div class="t" style="left:825.5px;top:1157.6px;font-size:11px;line-height:13px;color:#383838">150</div>
<div class="t" style="left:899px;top:1157.6px;font-size:11px;line-height:13px;color:#383838">150</div>
<div class="t" style="left:986px;top:1157.6px;font-size:11px;line-height:13px;color:#383838">0</div>
<div class="t" style="left:1073px;top:1157.6px;font-size:11px;line-height:13px;color:#383838">150</div>
<div class="t" style="left:1160px;top:1157.6px;font-size:11px;line-height:13px;color:#383838">0</div>
<div class="t" style="left:1247px;top:1157.6px;font-size:11px;line-height:13px;color:#383838">150</div>
<div class="t" style="left:1334px;top:1157.6px;font-size:11px;line-height:13px;color:#383838">0</div>
<div class="t" style="left:1421.5px;top:1157.6px;font-size:11px;line-height:13px;color:#383838">0</div>
<div class="t" style="left:1529px;top:1157.6px;font-size:11px;line-height:13px;color:#383838">150</div>
<div class="a" style="left:635.5px;top:1179.2px;width:941.5px;height:30.1px;background:#fbfbfe;border-bottom:1px solid #dfd9ee"></div>
<div class="t" style="left:645.5px;top:1187.7px;font-size:11px;line-height:13px;color:#383838">S1000-2M</div>
<div class="t" style="left:748px;top:1187.7px;font-size:11px;line-height:13px;color:#383838">CP0002</div>
<div class="t" style="left:825.5px;top:1187.7px;font-size:11px;line-height:13px;color:#383838">50</div>
<div class="t" style="left:899px;top:1187.7px;font-size:11px;line-height:13px;color:#383838">50</div>
<div class="t" style="left:986px;top:1187.7px;font-size:11px;line-height:13px;color:#383838">0</div>
<div class="t" style="left:1073px;top:1187.7px;font-size:11px;line-height:13px;color:#383838">50</div>
<div class="t" style="left:1160px;top:1187.7px;font-size:11px;line-height:13px;color:#383838">0</div>
<div class="t" style="left:1247px;top:1187.7px;font-size:11px;line-height:13px;color:#383838">50</div>
<div class="t" style="left:1334px;top:1187.7px;font-size:11px;line-height:13px;color:#383838">0</div>
<div class="t" style="left:1421.5px;top:1187.7px;font-size:11px;line-height:13px;color:#383838">0</div>
<div class="t" style="left:1529px;top:1187.7px;font-size:11px;line-height:13px;color:#383838">50</div>
<div class="a" style="left:635.5px;top:1209.3px;width:941.5px;height:30.1px;background:#eeeaf8;border-bottom:1px solid #dfd9ee"></div>
<div class="t" style="left:645.5px;top:1217.8px;font-size:11px;line-height:13px;color:#383838">AD-102</div>
<div class="t" style="left:748px;top:1217.8px;font-size:11px;line-height:13px;color:#383838">CP0001</div>
<div class="t" style="left:825.5px;top:1217.8px;font-size:11px;line-height:13px;color:#383838">50</div>
<div class="t" style="left:899px;top:1217.8px;font-size:11px;line-height:13px;color:#383838">50</div>
<div class="t" style="left:986px;top:1217.8px;font-size:11px;line-height:13px;color:#383838">0</div>
<div class="t" style="left:1073px;top:1217.8px;font-size:11px;line-height:13px;color:#383838">50</div>
<div class="t" style="left:1160px;top:1217.8px;font-size:11px;line-height:13px;color:#383838">0</div>
<div class="t" style="left:1247px;top:1217.8px;font-size:11px;line-height:13px;color:#383838">50</div>
<div class="t" style="left:1334px;top:1217.8px;font-size:11px;line-height:13px;color:#383838">0</div>
<div class="t" style="left:1421.5px;top:1217.8px;font-size:11px;line-height:13px;color:#383838">0</div>
<div class="t" style="left:1529px;top:1217.8px;font-size:11px;line-height:13px;color:#383838">50</div>
<div class="a" style="left:635.5px;top:1239.4px;width:941.5px;height:30.1px;background:#fbfbfe;border-bottom:1px solid #dfd9ee"></div>
<div class="t" style="left:645.5px;top:1247.9px;font-size:11px;line-height:13px;color:#383838">VC均热板</div>
<div class="t" style="left:748px;top:1247.9px;font-size:11px;line-height:13px;color:#383838">CP0006</div>
<div class="t" style="left:825.5px;top:1247.9px;font-size:11px;line-height:13px;color:#383838">50</div>
<div class="t" style="left:899px;top:1247.9px;font-size:11px;line-height:13px;color:#383838">50</div>
<div class="t" style="left:986px;top:1247.9px;font-size:11px;line-height:13px;color:#383838">0</div>
<div class="t" style="left:1073px;top:1247.9px;font-size:11px;line-height:13px;color:#383838">50</div>
<div class="t" style="left:1160px;top:1247.9px;font-size:11px;line-height:13px;color:#383838">0</div>
<div class="t" style="left:1247px;top:1247.9px;font-size:11px;line-height:13px;color:#383838">50</div>
<div class="t" style="left:1334px;top:1247.9px;font-size:11px;line-height:13px;color:#383838">0</div>
<div class="t" style="left:1421.5px;top:1247.9px;font-size:11px;line-height:13px;color:#383838">0</div>
<div class="t" style="left:1529px;top:1247.9px;font-size:11px;line-height:13px;color:#383838">50</div>
<div class="a" style="left:635.5px;top:1269.5px;width:941.5px;height:30.1px;background:#eeeaf8;border-bottom:1px solid #dfd9ee"></div>
<div class="t" style="left:645.5px;top:1278.0px;font-size:11px;line-height:13px;color:#383838">TR-M TYPE A</div>
<div class="t" style="left:748px;top:1278.0px;font-size:11px;line-height:13px;color:#383838">CP0005</div>
<div class="t" style="left:825.5px;top:1278.0px;font-size:11px;line-height:13px;color:#383838">50</div>
<div class="t" style="left:899px;top:1278.0px;font-size:11px;line-height:13px;color:#383838">50</div>
<div class="t" style="left:986px;top:1278.0px;font-size:11px;line-height:13px;color:#383838">0</div>
<div class="t" style="left:1073px;top:1278.0px;font-size:11px;line-height:13px;color:#383838">50</div>
<div class="t" style="left:1160px;top:1278.0px;font-size:11px;line-height:13px;color:#383838">0</div>
<div class="t" style="left:1247px;top:1278.0px;font-size:11px;line-height:13px;color:#383838">50</div>
<div class="t" style="left:1334px;top:1278.0px;font-size:11px;line-height:13px;color:#383838">0</div>
<div class="t" style="left:1421.5px;top:1278.0px;font-size:11px;line-height:13px;color:#383838">0</div>
<div class="t" style="left:1529px;top:1278.0px;font-size:11px;line-height:13px;color:#383838">50</div>
<div class="a" style="left:635.5px;top:1299.6px;width:941.5px;height:30.1px;background:#fbfbfe;border-bottom:1px solid #dfd9ee"></div>
<div class="t" style="left:645.5px;top:1308.1px;font-size:11px;line-height:13px;color:#383838">NF-A12x25</div>
<div class="t" style="left:748px;top:1308.1px;font-size:11px;line-height:13px;color:#383838">CP0004</div>
<div class="t" style="left:825.5px;top:1308.1px;font-size:11px;line-height:13px;color:#383838">150</div>
<div class="t" style="left:899px;top:1308.1px;font-size:11px;line-height:13px;color:#383838">50</div>
<div class="a" style="left:976.0px;top:1299.6px;width:87.0px;height:30.1px;background:#8d7cc8"></div>
<div class="t" style="left:986px;top:1308.1px;font-size:11px;line-height:13px;color:#fff">100</div>
<div class="t" style="left:1073px;top:1308.1px;font-size:11px;line-height:13px;color:#383838">50</div>
<div class="t" style="left:1160px;top:1308.1px;font-size:11px;line-height:13px;color:#383838">0</div>
<div class="t" style="left:1247px;top:1308.1px;font-size:11px;line-height:13px;color:#383838">50</div>
<div class="t" style="left:1334px;top:1308.1px;font-size:11px;line-height:13px;color:#383838">0</div>
<div class="t" style="left:1421.5px;top:1308.1px;font-size:11px;line-height:13px;color:#383838">0</div>
<div class="t" style="left:1529px;top:1308.1px;font-size:11px;line-height:13px;color:#383838">50</div>
<div class="a" style="left:635.5px;top:1329.7px;width:941.5px;height:30.1px;background:#eeeaf8;border-bottom:1px solid #dfd9ee"></div>
<div class="t" style="left:645.5px;top:1338.2px;font-size:11px;line-height:13px;color:#383838">VC均热板</div>
<div class="t" style="left:748px;top:1338.2px;font-size:11px;line-height:13px;color:#383838">CP0006</div>
<div class="t" style="left:825.5px;top:1338.2px;font-size:11px;line-height:13px;color:#383838">100</div>
<div class="t" style="left:899px;top:1338.2px;font-size:11px;line-height:13px;color:#383838">100</div>
<div class="t" style="left:986px;top:1338.2px;font-size:11px;line-height:13px;color:#383838">0</div>
<div class="t" style="left:1073px;top:1338.2px;font-size:11px;line-height:13px;color:#383838">100</div>
<div class="t" style="left:1160px;top:1338.2px;font-size:11px;line-height:13px;color:#383838">0</div>
<div class="t" style="left:1247px;top:1338.2px;font-size:11px;line-height:13px;color:#383838">100</div>
<div class="t" style="left:1334px;top:1338.2px;font-size:11px;line-height:13px;color:#383838">0</div>
<div class="t" style="left:1421.5px;top:1338.2px;font-size:11px;line-height:13px;color:#383838">0</div>
<div class="t" style="left:1529px;top:1338.2px;font-size:11px;line-height:13px;color:#383838">100</div>
<div class="a" style="left:635.5px;top:1359.8px;width:941.5px;height:30.1px;background:#fbfbfe;border-bottom:1px solid #dfd9ee"></div>
<div class="t" style="left:645.5px;top:1368.3px;font-size:11px;line-height:13px;color:#383838">TR-M TYPE A</div>
<div class="t" style="left:748px;top:1368.3px;font-size:11px;line-height:13px;color:#383838">CP0005</div>
<div class="t" style="left:825.5px;top:1368.3px;font-size:11px;line-height:13px;color:#383838">100</div>
<div class="t" style="left:899px;top:1368.3px;font-size:11px;line-height:13px;color:#383838">100</div>
<div class="t" style="left:986px;top:1368.3px;font-size:11px;line-height:13px;color:#383838">0</div>
<div class="t" style="left:1073px;top:1368.3px;font-size:11px;line-height:13px;color:#383838">100</div>
<div class="t" style="left:1160px;top:1368.3px;font-size:11px;line-height:13px;color:#383838">0</div>
<div class="t" style="left:1247px;top:1368.3px;font-size:11px;line-height:13px;color:#383838">100</div>
<div class="t" style="left:1334px;top:1368.3px;font-size:11px;line-height:13px;color:#383838">0</div>
<div class="t" style="left:1421.5px;top:1368.3px;font-size:11px;line-height:13px;color:#383838">0</div>
<div class="t" style="left:1529px;top:1368.3px;font-size:11px;line-height:13px;color:#383838">100</div>
<div class="a" style="left:635.5px;top:1389.9px;width:941.5px;height:30.1px;background:#eeeaf8;border-bottom:1px solid #dfd9ee"></div>
<div class="t" style="left:645.5px;top:1398.4px;font-size:11px;line-height:13px;color:#383838">NF-A12x25</div>
<div class="t" style="left:748px;top:1398.4px;font-size:11px;line-height:13px;color:#383838">CP0004</div>
<div class="t" style="left:825.5px;top:1398.4px;font-size:11px;line-height:13px;color:#383838">200</div>
<div class="t" style="left:899px;top:1398.4px;font-size:11px;line-height:13px;color:#383838">200</div>
<div class="t" style="left:986px;top:1398.4px;font-size:11px;line-height:13px;color:#383838">0</div>
<div class="t" style="left:1073px;top:1398.4px;font-size:11px;line-height:13px;color:#383838">200</div>
<div class="t" style="left:1160px;top:1398.4px;font-size:11px;line-height:13px;color:#383838">0</div>
<div class="t" style="left:1247px;top:1398.4px;font-size:11px;line-height:13px;color:#383838">200</div>
<div class="t" style="left:1334px;top:1398.4px;font-size:11px;line-height:13px;color:#383838">0</div>
<div class="t" style="left:1421.5px;top:1398.4px;font-size:11px;line-height:13px;color:#383838">0</div>
<div class="t" style="left:1529px;top:1398.4px;font-size:11px;line-height:13px;color:#383838">200</div>
<div class="a" style="left:265px;top:1088.9px;width:370.5px;height:90.3px;background:#eeeaf8;border-bottom:1px solid #dfd9ee"></div>
<div class="t" style="left:275px;top:1097.4px;font-size:11px;line-height:13px;color:#383838">CGDD240102-01</div>
<div class="a" style="left:406px;top:1095.4px;font-size:11px;line-height:17.5px;color:#383838;white-space:nowrap">示例：无锡道友云-第<br>3份采购订单</div>
<div class="t" style="left:531px;top:1097.4px;font-size:11px;line-height:13px;color:#383838">示例：无锡道友云</div>
<div class="a" style="left:265px;top:1179.2px;width:370.5px;height:60.2px;background:#fbfbfe;border-bottom:1px solid #dfd9ee"></div>
<div class="t" style="left:275px;top:1187.7px;font-size:11px;line-height:13px;color:#383838">CGDD231218-01</div>
<div class="a" style="left:406px;top:1185.7px;font-size:11px;line-height:17.5px;color:#383838;white-space:nowrap">示例：上海道友云-第<br>3份采购订单</div>
<div class="t" style="left:531px;top:1187.7px;font-size:11px;line-height:13px;color:#383838">示例：上海道友云</div>
<div class="a" style="left:265px;top:1239.4px;width:370.5px;height:90.3px;background:#fbfbfe;border-bottom:1px solid #dfd9ee"></div>
<div class="t" style="left:275px;top:1247.9px;font-size:11px;line-height:13px;color:#383838">CGDD231207-03</div>
<div class="a" style="left:406px;top:1245.9px;font-size:11px;line-height:17.5px;color:#383838;white-space:nowrap">示例：无锡道友云-第<br>2份采购订单</div>
<div class="t" style="left:531px;top:1247.9px;font-size:11px;line-height:13px;color:#383838">示例：无锡道友云</div>
<div class="a" style="left:265px;top:1329.7px;width:370.5px;height:90.3px;background:#eeeaf8;border-bottom:1px solid #dfd9ee"></div>
<div class="t" style="left:275px;top:1338.2px;font-size:11px;line-height:13px;color:#383838">CGDD231207-02</div>
<div class="a" style="left:406px;top:1336.2px;font-size:11px;line-height:17.5px;color:#383838;white-space:nowrap">示例：杭州道友云-第<br>3份采购订单</div>
<div class="t" style="left:531px;top:1338.2px;font-size:11px;line-height:13px;color:#383838">示例：杭州道友云</div>
<div class="a" style="left:395.5px;top:1088px;width:1px;height:330px;background:#dfd9ee"></div>
<div class="a" style="left:520.5px;top:1088px;width:1px;height:330px;background:#dfd9ee"></div>
<div class="a" style="left:635.0px;top:1088px;width:1px;height:330px;background:#dfd9ee"></div>
<div class="a" style="left:737.5px;top:1088px;width:1px;height:330px;background:#dfd9ee"></div>
<div class="a" style="left:815.0px;top:1088px;width:1px;height:330px;background:#dfd9ee"></div>
<div class="a" style="left:888.5px;top:1088px;width:1px;height:330px;background:#dfd9ee"></div>
<div class="a" style="left:975.5px;top:1088px;width:1px;height:330px;background:#dfd9ee"></div>
<div class="a" style="left:1062.5px;top:1088px;width:1px;height:330px;background:#dfd9ee"></div>
<div class="a" style="left:1149.5px;top:1088px;width:1px;height:330px;background:#dfd9ee"></div>
<div class="a" style="left:1236.5px;top:1088px;width:1px;height:330px;background:#dfd9ee"></div>
<div class="a" style="left:1323.5px;top:1088px;width:1px;height:330px;background:#dfd9ee"></div>
<div class="a" style="left:1411.0px;top:1088px;width:1px;height:330px;background:#dfd9ee"></div>
<div class="a" style="left:1518.5px;top:1088px;width:1px;height:330px;background:#dfd9ee"></div>
</div>
<div class="a" style="left:1583px;top:1058px;width:1px;height:360px;background:#f0f0f2"></div>
<!-- WATERMARK -->
<div class="t" style="left:1310px;top:1334px;font-size:38px;line-height:46px;color:#fff;-webkit-text-stroke:1px #fff;text-shadow:-1.5px 2px 0 #111,-0.5px 2.5px 0 #222">头条</div><div class="t" style="left:1399px;top:1334px;font-size:38px;line-height:46px;color:#fff;-webkit-text-stroke:1px #fff;text-shadow:-1.5px 2px 0 #111,-0.5px 2.5px 0 #222;letter-spacing:2.5px">@简道云</div>
<!-- ARROW -->
<svg class="a" style="left:1470px;top:40px;z-index:10" width="110" height="120" viewBox="1470 40 110 120">
 <defs><filter id="sh" x="-50%" y="-50%" width="200%" height="200%"><feGaussianBlur in="SourceAlpha" stdDeviation="6"/><feOffset dx="1" dy="2"/><feComponentTransfer><feFuncA type="linear" slope="0.4"/></feComponentTransfer><feMerge><feMergeNode/><feMergeNode in="SourceGraphic"/></feMerge></filter></defs>
 <g filter="url(#sh)">
  <path d="M1498 90 L1523 63 L1548 90" stroke="#fff" stroke-width="17" fill="none" stroke-linecap="round" stroke-linejoin="round"/>
  <rect x="1514.5" y="66" width="18" height="77" rx="3" fill="#fff"/>
 </g>
 <path d="M1498 90.5 L1523 64 L1548 90.5" stroke="#ec930c" stroke-width="7" fill="none" stroke-linejoin="miter" stroke-miterlimit="10"/>
 <path d="M1523.5 68 V138" stroke="#ec930c" stroke-width="7" fill="none"/>
</svg>
</body></html>
